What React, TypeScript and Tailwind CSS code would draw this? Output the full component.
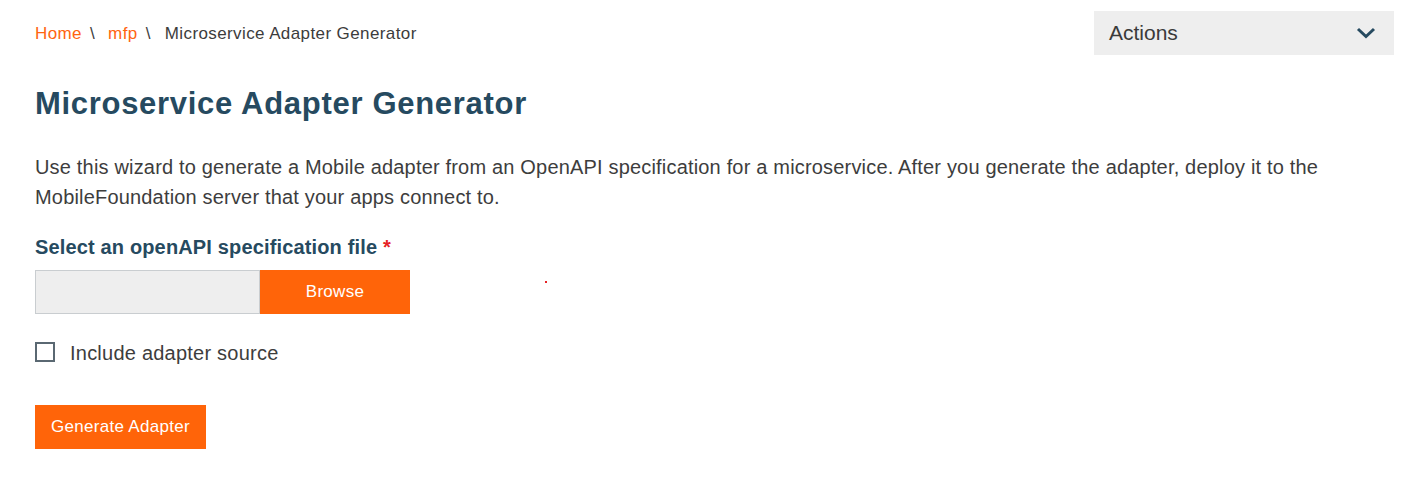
import React from "react";

export default function App() {
  return (
    <div
      className="relative w-[1411px] h-[481px] bg-white text-[#3d3d3d]"
      style={{ fontFamily: '"Liberation Sans", Arial, sans-serif' }}
    >
      <div className="flex items-start justify-between pl-[35px] pr-[17px] pt-[11px]">
        <nav className="flex items-center h-[44px] text-[17px] tracking-[0.4px] leading-none">
          <span className="text-[#ff6410]">Home</span>
          <span className="text-[#3c3c3c] ml-[8px] mr-[13px]">\</span>
          <span className="text-[#ff6410]">mfp</span>
          <span className="text-[#3c3c3c] ml-[8px] mr-[14px]">\</span>
          <span className="text-[#3c3c3c]">Microservice Adapter Generator</span>
        </nav>
        <div className="w-[300px] h-[44px] bg-[#eeeeee] flex items-center justify-between pl-[15px] pr-[18px]">
          <span className="text-[21px] text-[#3a3a3a]">Actions</span>
          <svg width="20" height="12" viewBox="0 0 20 12" fill="none">
            <path d="M2 2 L10 9.5 L18 2" stroke="#264a60" strokeWidth="3" />
          </svg>
        </div>
      </div>

      <div className="pl-[35px]">
        <h1 className="mt-[31px] text-[31px] leading-[36px] tracking-[0.7px] font-bold text-[#264a60]">
          Microservice Adapter Generator
        </h1>
        <p className="mt-[30px] text-[20px] leading-[30px] tracking-[0.18px] text-[#3d3d3d] max-w-[1300px]">
          Use this wizard to generate a Mobile adapter from an OpenAPI specification for a microservice. After you generate the adapter, deploy it to the MobileFoundation server that your apps connect to.
        </p>
        <div className="mt-[23px] text-[20px] leading-[24px] tracking-[0.15px] font-bold text-[#264a60]">
          Select an openAPI specification file <span className="text-[#e62325]">*</span>
        </div>
        <div className="mt-[11px] flex">
          <div className="w-[225px] h-[44px] bg-[#eeeeee] border border-[#c9cdd0]" />
          <button className="w-[150px] h-[44px] bg-[#ff6409] text-white text-[17px] tracking-[0.3px]">Browse</button>
        </div>
        <label className="mt-[26px] h-[24px] flex items-center">
          <span className="w-[20px] h-[20px] border-2 border-[#5a6872] bg-white" />
          <span className="ml-[15px] pt-[1px] text-[20px] leading-[24px] tracking-[0.23px] text-[#3d3d3d]">Include adapter source</span>
        </label>
        <button className="mt-[41px] h-[44px] px-[16px] bg-[#ff6409] text-white text-[17px] tracking-[0.3px]">
          Generate Adapter
        </button>
      </div>
      <div className="absolute left-[545px] top-[281px] w-[2px] h-[2px] bg-[#e62325]" />
    </div>
  );
}
